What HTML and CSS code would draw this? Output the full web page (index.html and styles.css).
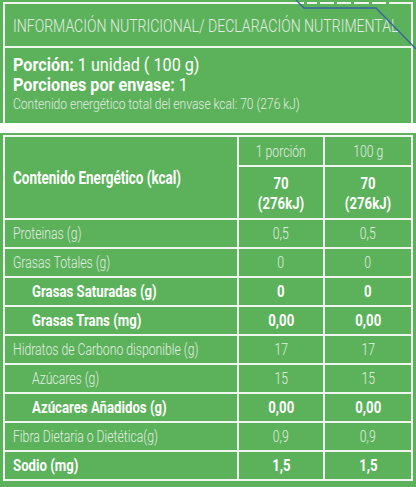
FILE: index.html
```html
<!DOCTYPE html>
<html lang="es">
<head>
    <meta charset="UTF-8">
    <meta name="viewport" content="width=device-width, initial-scale=1.0">
    <title>Información nutricional</title>
    <link rel="stylesheet" href="styles.css">
</head>
<body>
    <div class="panel panel-top">
        <div class="box">
            <div class="title"><span class="t">INFORMACIÓN NUTRICIONAL/ DECLARACIÓN NUTRIMENTAL</span></div>
            <div class="serving">
                <div class="line"><span class="t"><b>Porción:</b> 1 unidad ( 100 g)</span></div>
                <div class="line"><span class="t"><b>Porciones por envase:</b> 1</span></div>
                <div class="small"><span class="t">Contenido energético total del envase kcal: 70 (276 kJ)</span></div>
            </div>
        </div>
        <svg class="fold" width="416" height="60" viewBox="0 0 416 60">
            <g fill="#5bb25a">
                <rect x="304" y="0" width="3" height="6"/>
                <rect x="317" y="0" width="3" height="6"/>
                <rect x="334" y="0" width="3" height="6"/>
                <rect x="351" y="0" width="3" height="6"/>
                <rect x="369" y="0" width="3" height="6"/>
                <rect x="386" y="0" width="3" height="6"/>
            </g>
            <path d="M296 0 L304 8 L376 8 L416 49" fill="none" stroke="#3a64a8" stroke-width="1.3"/>
        </svg>
    </div>

    <div class="gap"></div>

    <div class="panel panel-bottom">
        <table class="facts">
            <colgroup>
                <col class="c-name">
                <col class="c-val">
                <col>
            </colgroup>
            <tr class="head">
                <th rowspan="2" class="name bold"><span class="t">Contenido Energético (kcal)</span></th>
                <th class="col"><span class="t">1 porción</span></th>
                <th class="col"><span class="t">100 g</span></th>
            </tr>
            <tr class="energy">
                <td class="bold"><span class="t">70<br>(276kJ)</span></td>
                <td class="bold"><span class="t">70<br>(276kJ)</span></td>
            </tr>
            <tr><td class="name"><span class="t">Proteinas (g)</span></td><td><span class="t">0,5</span></td><td><span class="t">0,5</span></td></tr>
            <tr><td class="name"><span class="t">Grasas Totales (g)</span></td><td><span class="t">0</span></td><td><span class="t">0</span></td></tr>
            <tr class="bold"><td class="name sub"><span class="t">Grasas Saturadas (g)</span></td><td><span class="t">0</span></td><td><span class="t">0</span></td></tr>
            <tr class="bold"><td class="name sub"><span class="t">Grasas Trans (mg)</span></td><td><span class="t">0,00</span></td><td><span class="t">0,00</span></td></tr>
            <tr><td class="name"><span class="t">Hidratos de Carbono disponible (g)</span></td><td><span class="t">17</span></td><td><span class="t">17</span></td></tr>
            <tr><td class="name sub"><span class="t">Azúcares (g)</span></td><td><span class="t">15</span></td><td><span class="t">15</span></td></tr>
            <tr class="bold"><td class="name sub"><span class="t">Azúcares Añadidos (g)</span></td><td><span class="t">0,00</span></td><td><span class="t">0,00</span></td></tr>
            <tr><td class="name"><span class="t">Fibra Dietaria o Dietética(g)</span></td><td><span class="t">0,9</span></td><td><span class="t">0,9</span></td></tr>
            <tr class="bold"><td class="name"><span class="t">Sodio (mg)</span></td><td><span class="t">1,5</span></td><td><span class="t">1,5</span></td></tr>
        </table>
    </div>
</body>
</html>
```

FILE: styles.css
```css
* {
    box-sizing: border-box;
}

body {
    margin: 0;
    width: 416px;
    height: 487px;
    overflow: hidden;
    background-color: #5bb25a;
    font-family: Roboto, "Liberation Sans", sans-serif;
    color: #e4eee4;
}

/* condensed look: the page font has no narrow face */
.t {
    display: inline-block;
    white-space: nowrap;
    transform-origin: left center;
}

.panel {
    background-color: #5bb25a;
    padding: 2px 3px 0 3px;
}

.panel-top {
    position: relative;
    height: 123px;
}

.panel-bottom {
    padding-bottom: 5px;
}

.gap {
    height: 10px;
    background-color: #fff;
}

.box {
    border: 2px solid #eef6ee;
    border-bottom: none;
    height: 121px;
}

.title {
    height: 44px;
    padding: 1px 0 0 8px;
    font-size: 18.5px;
    line-height: 42px;
    font-weight: 300;
    color: #e2ece2;
    border-bottom: 2px solid #eef6ee;
}

.title .t {
    transform: scaleX(0.76);
}

.serving {
    padding: 7px 0 0 8px;
}

.line {
    font-size: 18px;
    line-height: 20px;
    color: #fff;
}

.line .t {
    transform: scaleX(0.9);
}

.line b {
    font-weight: 700;
}

.small {
    margin-top: 1px;
    font-size: 14.5px;
    line-height: 17px;
    font-weight: 300;
    color: #e2ece2;
}

.small .t {
    transform: scaleX(0.83);
}

.fold {
    position: absolute;
    top: 0;
    left: 0;
}

.facts {
    width: 410px;
    table-layout: fixed;
    border-collapse: collapse;
    border: 2px solid #eef6ee;
    font-size: 16.5px;
    font-weight: 300;
}

.c-name {
    width: 234px;
}

.c-val {
    width: 86px;
}

.facts th,
.facts td {
    border: 2px solid #eef6ee;
    padding: 0;
    text-align: center;
    font-weight: inherit;
    height: 29px;
}

.facts .t {
    transform: scaleX(0.74);
    transform-origin: center;
}

.facts .bold .t,
.facts .bold td .t {
    transform: scaleX(0.8);
}

.facts .name .t {
    transform-origin: left center;
}

.facts .name {
    text-align: left;
    padding-left: 8px;
}

.facts .sub {
    padding-left: 27px;
}

.facts .col {
    height: 30px;
}

.facts .energy td {
    height: 53px;
    line-height: 20px;
    padding-top: 2px;
}

.facts .bold,
.facts .bold td {
    font-weight: 700;
    color: #fff;
}

.facts th.name.bold {
    font-size: 17.5px;
}

.facts th.name.bold .t {
    transform: scaleX(0.77);
}
```
